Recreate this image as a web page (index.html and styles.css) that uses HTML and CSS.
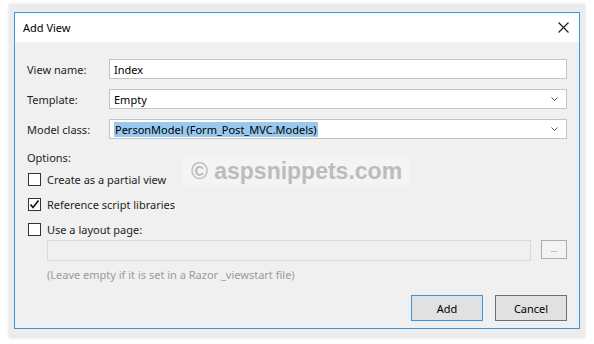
FILE: index.html
```html
<!DOCTYPE html>
<html>
<head>
  <link rel="stylesheet" href="styles.css">
</head>
<body>

  <div class="frame">
    <div class="dialog">
      <!-- Title bar -->
      <div class="titlebar">
        <span class="title">Add View</span>
        <svg class="close" width="11" height="11" viewBox="0 0 11 11">
          <path d="M0.5 0.5 L10.5 10.5 M10.5 0.5 L0.5 10.5" stroke="#1a1a1a" stroke-width="1.1" fill="none"/>
        </svg>
      </div>

      <!-- Body -->
      <div class="body">
        <div class="fields">
          <label class="label">View name:</label>
          <div class="field">Index</div>

          <label class="label">Template:</label>
          <div class="field select">
            <span>Empty</span>
            <svg class="chevron" width="7" height="4" viewBox="0 0 7 4"><path d="M0.5 0.5 L3.5 3.5 L6.5 0.5" stroke="#555" fill="none"/></svg>
          </div>

          <label class="label">Model class:</label>
          <div class="field select">
            <span class="selected">PersonModel (Form_Post_MVC.Models)</span>
            <svg class="chevron" width="7" height="4" viewBox="0 0 7 4"><path d="M0.5 0.5 L3.5 3.5 L6.5 0.5" stroke="#555" fill="none"/></svg>
          </div>
        </div>

        <div class="options-label">Options:</div>

        <div class="check-list">
          <div class="check-row">
            <span class="box"></span>
            <span>Create as a partial view</span>
          </div>
          <div class="check-row">
            <span class="box">
              <svg width="11" height="11" viewBox="0 0 11 11"><path d="M1.5 5.5 L4 8.5 L9.5 1.5" stroke="#111" stroke-width="1.6" fill="none"/></svg>
            </span>
            <span>Reference script libraries</span>
          </div>
          <div class="check-row">
            <span class="box"></span>
            <span>Use a layout page:</span>
          </div>
        </div>

        <div class="layout-row">
          <div class="layout-input"></div>
          <div class="browse">...</div>
        </div>
        <div class="hint">(Leave empty if it is set in a Razor _viewstart file)</div>

        <div class="buttons">
          <div class="btn btn-default">Add</div>
          <div class="btn">Cancel</div>
        </div>
      </div>

      <div class="watermark">© aspsnippets.com</div>
    </div>
  </div>

</body>
</html>
```

FILE: styles.css
```css
body {
  margin: 0;
  width: 594px;
  height: 344px;
  background: #fff;
  font-family: "Noto Sans", sans-serif;
  font-size: 11px;
  color: #1e1e1e;
  overflow: hidden;
}

.frame {
  margin: 4px 0 0 9px;
  width: 576px;
  height: 334px;
  padding: 8px 0 0 5px;
  box-sizing: border-box;
  background: #ececec;
  box-shadow: 0 0 3px #e0e0e0;
}

.dialog {
  position: relative;
  width: 566px;
  height: 317px;
  border: 1px solid #3d95e0;
  box-sizing: border-box;
  background: #f0f0f0;
  display: flex;
  flex-direction: column;
}

.titlebar {
  height: 29px;
  background: #fff;
  display: flex;
  align-items: center;
  justify-content: space-between;
  padding: 0 10px 0 8px;
}

.title {
  color: #000;
}

.body {
  flex: 1;
  padding: 17px 12px 0 12px;
  display: flex;
  flex-direction: column;
}

.fields {
  display: grid;
  grid-template-columns: 82px 1fr;
  row-gap: 10px;
  align-items: center;
}

.field {
  height: 20px;
  border: 1px solid #c4c4c4;
  background: #fff;
  box-sizing: border-box;
  padding: 0 4px;
  display: flex;
  align-items: center;
  justify-content: space-between;
  color: #000;
}

.selected {
  background: #99c9ef;
  padding: 0 1px;
}

.chevron {
  margin-right: 4px;
}

.options-label {
  margin-top: 11px;
  line-height: 16px;
}

.check-list {
  margin-top: 7px;
  display: flex;
  flex-direction: column;
  gap: 12px;
}

.check-row {
  height: 13px;
  display: flex;
  align-items: center;
  gap: 6px;
  margin-left: 1px;
}

.box {
  width: 13px;
  height: 13px;
  border: 1px solid #333;
  background: #fff;
  box-sizing: border-box;
  display: flex;
  align-items: center;
  justify-content: center;
}

.layout-row {
  margin-top: 4px;
  display: flex;
  gap: 10px;
  padding-left: 20px;
}

.layout-input {
  flex: 1;
  height: 19px;
  border: 1px solid #d9d9d9;
  background: #f0f0f0;
}

.browse {
  width: 26px;
  height: 19px;
  border: 1px solid #adadad;
  background: #f3f3f3;
  box-sizing: border-box;
  font-size: 9px;
  color: #888;
  text-align: center;
  line-height: 16px;
}

.hint {
  margin-top: 6px;
  padding-left: 20px;
  line-height: 16px;
  color: #9a9a9a;
}

.buttons {
  margin-top: 12px;
  display: flex;
  justify-content: flex-end;
  gap: 12px;
}

.btn {
  width: 72px;
  height: 26px;
  box-sizing: border-box;
  border: 1px solid #707070;
  background: #e1e1e1;
  display: flex;
  align-items: center;
  justify-content: center;
  color: #000;
}

.btn-default {
  border-color: #3d95e0;
}

.watermark {
  position: absolute;
  left: 168px;
  top: 144px;
  width: 227px;
  height: 28px;
  background: #f4f4f4;
  color: #bcbcbc;
  font-family: "Liberation Sans", Arial, sans-serif;
  font-weight: bold;
  font-size: 23px;
  line-height: 28px;
  text-align: center;
}
```
